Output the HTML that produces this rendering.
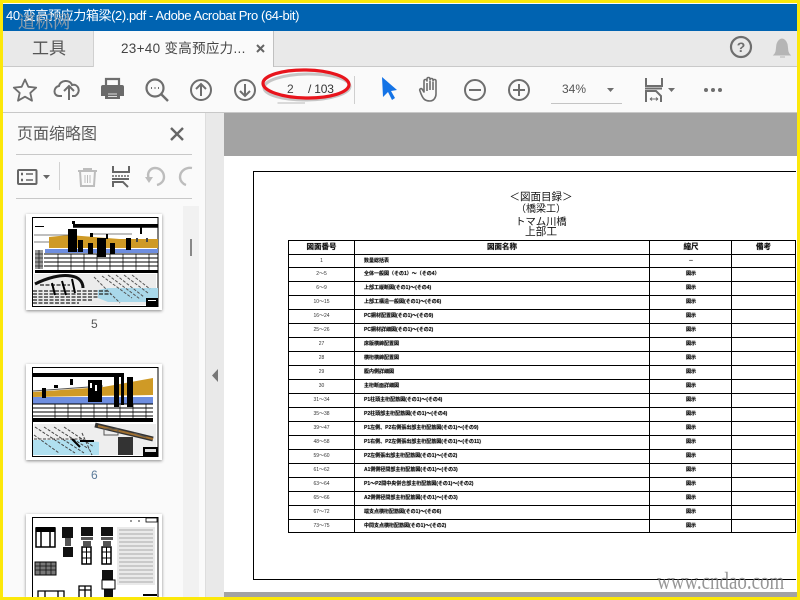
<!DOCTYPE html>
<html lang="zh"><head><meta charset="utf-8"><title>Acrobat</title>
<style>
*{box-sizing:border-box;margin:0;padding:0}
html,body{width:800px;height:600px;overflow:hidden;background:#fff}
body{position:relative;font-family:"Liberation Sans","Noto Sans CJK SC",sans-serif}
.a{position:absolute;white-space:nowrap}
.jp{font-family:"Liberation Sans","Noto Sans CJK JP",sans-serif}
svg{position:absolute;overflow:visible}
.r{position:absolute;left:288px;width:508px;border:1px solid #000;border-top:0;height:14px}
.r i{position:absolute;top:-1px;bottom:0;width:1px;background:#000}
.r b{position:absolute;top:0;line-height:13px;font-size:5px;font-weight:700;color:#111;white-space:nowrap;text-shadow:0 0 .6px rgba(0,0,0,.7);font-family:"Liberation Sans","Noto Sans CJK JP",sans-serif}
.n{left:0;width:65px;text-align:center;font-weight:400!important;text-shadow:none!important;color:#333!important}
.t{left:75px}
.s{left:360px;width:84px;text-align:center}
.h{font-size:7.500px!important;line-height:12px!important}
</style></head><body>
<div class="a" style="left:3px;top:3px;width:794px;height:594px;background:#fafafa"></div>
<div class="a" style="left:3px;top:4px;width:794px;height:27px;background:#0063b1"></div>
<div class="a" style="left:6px;top:7px;font-size:13px;letter-spacing:-.4px;line-height:18px;color:#fff">40 变高预应力箱梁(2).pdf - Adobe Acrobat Pro (64-bit)</div>
<div class="a" style="left:3px;top:31px;width:794px;height:36px;background:#e9e9e9;border-bottom:1px solid #c9c9c9"></div>
<div class="a" style="left:93px;top:31px;width:181px;height:36px;background:#fafafa;border-left:1px solid #d0d0d0;border-right:1px solid #c0c0c0"></div>
<div class="a" style="left:32px;top:37px;font-size:17px;line-height:24px;color:#555">工具</div>
<div class="a" style="left:121px;top:39px;font-size:13.5px;letter-spacing:.3px;line-height:20px;color:#444">23+40 变高预应力...</div>
<svg style="left:0;top:0" width="800" height="115" fill="none" stroke="#6e6e6e" stroke-width="2">
<path d="M257 45l7 7M264 45l-7 7" stroke="#666" stroke-width="2"/>
<circle cx="741" cy="47" r="10" stroke-width="2.2"/><text x="741" y="52" font-size="14" font-weight="700" fill="#6e6e6e" stroke="none" text-anchor="middle" font-family="Liberation Sans">?</text>
<path d="M774 55c3-3 2-6 3-11 1-3 3-5 5-5s4 2 5 5c1 5 0 8 3 11zM780 57h5" fill="#b5b5b5" stroke="#b5b5b5" stroke-width="1"/>
<path d="M25 79.500l3.300 7.300 7.900.8-5.900 5.300 1.700 7.800-7-4-7 4 1.700-7.800-5.900-5.300 7.900-.8z" stroke-width="1.800" stroke-linejoin="round"/>
<path d="M62 96h-3c-6 0-6-9 0-10 1-6 11-7 13-1 6-2 10 7 3 11h-3M69 100V87M64 91l5-5 5 5"/>
<path d="M106 85v-6h13v6" stroke-width="2.200"/><path d="M103 85h19a2 2 0 0 1 2 2v9h-5v-5h-13v5h-5v-9a2 2 0 0 1 2-2z" fill="#6a6a6a" stroke="none"/><rect x="105" y="91" width="15" height="8" fill="#6a6a6a" stroke="none"/><path d="M108 94h9M108 96.500h9" stroke="#ddd" stroke-width="1"/>
<circle cx="155" cy="88" r="8.500" stroke-width="2.200"/><path d="M161 94l7 7" stroke-width="2.400"/><path d="M151 88h1M154.500 88h1M158 88h1" stroke-width="2"/>
<circle cx="201" cy="90" r="10"/><path d="M201 96V84M196 89l5-5 5 5"/>
<circle cx="245" cy="90" r="10"/><path d="M245 84v12M240 91l5 5 5-5"/>
<path d="M277.500 103H305" stroke="#bbb" stroke-width="1"/>
<path d="M354.500 76v28" stroke="#cfcfcf" stroke-width="1"/>
<path d="M382 79l15 13-6 1 4 7-3 2-4-8-5 5z" fill="#1473e6" stroke="none" transform="translate(0,-2)"/>
<path d="M424 99c-2-2-3-5-4-8-1-2 1-3 2-2l2 3V81c0-2 3-2 3 0v-2c0-2 3-2 3 0v1c0-2 3-2 3 0v1c0-2 3-2 3 0v13c0 3-2 7-6 7-3 0-5-1-6-2zM427 83v8M430 81v9M433 82v8" stroke-width="1.600" stroke-linejoin="round"/>
<circle cx="475" cy="90" r="10"/><path d="M469 90h12"/>
<circle cx="519" cy="90" r="10"/><path d="M513 90h12M519 84v12"/>
<path d="M551 103.500h71" stroke="#c4c4c4" stroke-width="1"/>
<path d="M607 88h7l-3.500 4z" fill="#6e6e6e" stroke="none"/>
<path d="M646 78v8h16v-8M645 88.500h17" stroke-width="2"/><path d="M646 102V91h10l5 5v6" stroke-width="2"/><path d="M650 99h8M650 99l2-1.500M650 99l2 1.500M658 99l-2-1.500M658 99l-2 1.500" stroke-width="1"/>
<path d="M668 88h7l-3.500 4z" fill="#6e6e6e" stroke="none"/>
<circle cx="706" cy="90" r="2" fill="#6e6e6e" stroke="none"/><circle cx="713" cy="90" r="2" fill="#6e6e6e" stroke="none"/><circle cx="720" cy="90" r="2" fill="#6e6e6e" stroke="none"/>
</svg>
<div class="a" style="left:287px;top:81px;font-size:12px;line-height:16px;color:#444">2</div>
<div class="a" style="left:308px;top:81px;font-size:12px;letter-spacing:-.2px;line-height:16px;color:#333">/ 103</div>
<div class="a" style="left:562px;top:81px;font-size:12px;line-height:16px;color:#555">34%</div>
<svg style="left:0;top:0" width="400" height="115" fill="none">
<ellipse cx="307" cy="87" rx="43" ry="13" stroke="#888" stroke-width="3" opacity=".45" transform="rotate(-1 307 87)"/>
<ellipse cx="306" cy="84" rx="43" ry="14" stroke="#e8141c" stroke-width="3.200" transform="rotate(1 306 84)"/>
</svg>
<div class="a" style="left:3px;top:112px;width:794px;height:1px;background:#c8c8c8"></div>
<!-- side panel -->
<div class="a" style="left:205px;top:113px;width:19px;height:484px;background:#e9e9e9;border-left:1px solid #ddd"></div>
<div class="a" style="left:183px;top:206px;width:16px;height:391px;background:#f1f1f1"></div>
<div class="a" style="left:190px;top:239px;width:2px;height:17px;background:#888"></div>
<svg style="left:0;top:0" width="225" height="400"><path d="M218 369v13l-6-6.500z" fill="#777"/></svg>
<div class="a" style="left:17px;top:123px;font-size:16px;line-height:23px;color:#5a5a5a">页面缩略图</div>
<div class="a" style="left:16px;top:154px;width:176px;height:1px;background:#c8c8c8"></div>
<div class="a" style="left:16px;top:198px;width:176px;height:1px;background:#c8c8c8"></div>
<div class="a" style="left:59px;top:162px;width:1px;height:28px;background:#d2d2d2"></div>
<svg style="left:0;top:110px" width="200" height="90" fill="none" stroke="#666" stroke-width="2">
<path d="M171 18l12 12M183 18l-12 12" stroke-width="2.400"/>
<rect x="18" y="60" width="18.500" height="14" rx="1"/><path d="M21 64h2M21 70h2" stroke-width="2.500"/><path d="M26 64h7M26 70h7" stroke-width="1.500"/>
<path d="M43 65h7l-3.500 4z" fill="#666" stroke="none"/>
<g stroke="#bdbdbd"><path d="M78 61h19M84 61v-2h7v2M80 61l1 15h13l1-15" stroke-width="2"/><path d="M85 65v8M87.500 65v8M90 65v8" stroke-width="1"/></g>
<path d="M113 56v6h16v-6M112 69h17" stroke-width="2"/><path d="M112 66h17" stroke-dasharray="2 1" stroke-width="1.500"/><path d="M113 77v-5h10l5 5" stroke-width="2"/>
<g stroke="#bdbdbd" stroke-width="2.400"><path d="M149 69c-3-7 2-11 6-11 6 0 9 5 9 9 0 4-3 7-7 8"/><path d="M145 67h8l-4 6z" fill="#bdbdbd" stroke="none"/><path d="M192 58c-6-1-12 3-12 9 0 4 3 7 6 8"/></g>
</svg>
<!-- thumb 5 -->
<div class="a" style="left:26px;top:214px;width:136px;height:96px;background:#fff;box-shadow:0 1px 3px rgba(0,0,0,.45)"></div>
<svg style="left:32px;top:217px;filter:blur(.3px)" width="127" height="90">
<rect x=".5" y=".5" width="125.500" height="89" fill="#fff" stroke="#000"/>
<path d="M17 20l20-2 89 7v6H17z" fill="#cf9a26"/><rect x="17" y="22" width="109" height="3" fill="#cf9a26"/>
<rect x="13" y="32" width="113" height="4" fill="#6e8ee0"/>
<path d="M2 18h40M60 17h40M2 25h15" stroke="#555" stroke-width=".8"/>
<path d="M41 7h85v3.700H41zM36 12h9v23h-9zM46 23h5v12h-5zM56 26h5v11h-5zM65 21h9v19h-9zM78 26h5v11h-5zM94 21h5v12h-5zM3 9h9v1H3zM40 4h3v3h-3zM108 10h2v7h-2zM58 16h3v4h-3zM74 17h2v5h-2z" fill="#000"/>
<path d="M104 21h2v4h-2zM114 21h2v4h-2z" fill="#444"/>
<path d="M12 37h114M12 41h114M12 45h114M12 49h114" stroke="#000" stroke-width="1"/>
<path d="M26 37v16M39 37v16M52 37v16M65 37v16M78 37v16M91 37v16M104 37v16M117 37v16" stroke="#000" stroke-width=".7"/>
<rect x="3" y="53" width="123" height="3" fill="#000"/>
<path d="M3 33h8v19H3z" fill="#999"/><path d="M3 37h8M3 41h8M3 45h8M3 49h8M7 33v19" stroke="#222" stroke-width=".8"/>
<rect x="2" y="57" width="122" height="31" fill="#ececec"/>
<path d="M66 73l10-2 50 0v14H76l-10-4z" fill="#a9d8ea"/>
<path d="M3 67c12-6 26-10 36-8 8 1 12 6 12 12" stroke="#111" stroke-width="3" fill="none"/>
<path d="M1 74h75M1 77h78M1 80h66M1 83h60M1 86h46M8 68h30" stroke="#222" stroke-width="1.300" stroke-dasharray="4 1.500" fill="none"/>
<path d="M70 59l30 22M76 58l32 24M84 58l28 22M92 58l24 18M62 60l26 26M100 58l18 14" stroke="#555" stroke-width="1" stroke-dasharray="3 1.500" fill="none"/>
<path d="M40 62l3 14M30 64l4 14M20 66l3 12" stroke="#000" stroke-width="2"/>
<rect x="114" y="81" width="12" height="9" fill="#000"/><rect x="116" y="83" width="8" height="1" fill="#fff"/>
</svg>
<div class="a" style="left:91px;top:316px;font-size:12px;line-height:16px;color:#555">5</div>
<!-- thumb 6 -->
<div class="a" style="left:26px;top:364px;width:136px;height:96px;background:#fff;box-shadow:0 1px 3px rgba(0,0,0,.45)"></div>
<svg style="left:32px;top:367px;filter:blur(.3px)" width="127" height="90">
<rect x=".5" y=".5" width="125.500" height="89" fill="#fff" stroke="#000"/>
<path d="M1 25l70-5 50-9v17L1 30z" fill="#cf9a26"/><path d="M1 24l70-5" stroke="#555" stroke-width="1"/>
<rect x="1" y="30" width="120" height="7" fill="#6e8ee0"/>
<path d="M1 6h91v4H1zM10 21h4v10h-4zM56 13h14v22H56zM82 6h5v34h-5zM89 6h3v32h-3zM95 10h6v30h-6zM22 18h4v3h-4zM38 12h3v6h-3z" fill="#000"/>
<path d="M58 16h2v5h-2zM63 18h2v6h-2z" fill="#fff"/>
<path d="M1 37h120M1 41h120M1 45h120M1 49h120" stroke="#000" stroke-width="1"/><rect x="1" y="51" width="120" height="4" fill="#000"/>
<path d="M23 37v14M36 37v14M49 37v14M62 37v14M75 37v14M88 37v14M101 37v14M114 37v14" stroke="#000" stroke-width=".7"/>
<rect x="2" y="57" width="122" height="31" fill="#eee"/>
<path d="M1 73h46l20 2v13H1z" fill="#b0e0f0"/>
<path d="M63 58l58 14" stroke="#333" stroke-width="5"/><path d="M66 59l55 13" stroke="#a07030" stroke-width="2"/>
<path d="M3 60l40 26M12 60l40 26M22 60l35 22M32 60l30 20M2 68l25 18M2 72h50M50 66l10 22" stroke="#444" stroke-width="1" stroke-dasharray="3 1.500" fill="none"/>
<path d="M40 72l8 8M48 74h14" stroke="#000" stroke-width="2"/>
<path d="M86 70h15v18H86z" fill="#333"/><path d="M72 62h14v6H72zM102 66l12 4" stroke="#555" stroke-width="1" fill="none"/>
<rect x="111" y="80" width="15" height="10" fill="#000"/><rect x="113" y="82" width="11" height="3" fill="#ddd"/>
</svg>
<div class="a" style="left:91px;top:467px;font-size:12px;line-height:16px;color:#5b7a9a">6</div>
<!-- thumb 7 -->
<div class="a" style="left:26px;top:514px;width:136px;height:83px;background:#fff;box-shadow:0 1px 3px rgba(0,0,0,.45)"></div>
<svg style="left:32px;top:517px;filter:blur(.3px)" width="127" height="80">
<path d="M.5 80V.5h125.500V80" fill="#fff" stroke="#000"/>
<rect x="4" y="11" width="19" height="19" fill="#fff" stroke="#000" stroke-width="1.500"/><rect x="4" y="10" width="19" height="5" fill="#000"/><path d="M9 15v15M18 15v15" stroke="#000" stroke-width="1.500"/>
<path d="M30 10h11v11H30zM49 10h12v9H49zM69 10h12v9H69zM31 30h10v10H31z" fill="#111"/>
<path d="M49 20h12v3H49zM69 20h12v3H69zM33 21h6v8h-6zM51 24h8v5h-8zM71 24h8v5h-8z" fill="#555"/>
<rect x="50" y="30" width="9" height="17" fill="#fff" stroke="#000" stroke-width="1.500"/><rect x="70" y="30" width="9" height="17" fill="#fff" stroke="#000" stroke-width="1.500"/>
<path d="M54.500 30v17M74.500 30v17M50 35h9M70 35h9M50 41h9M70 41h9" stroke="#000"/>
<rect x="85" y="10" width="38" height="58" fill="#eaeaea"/>
<path d="M87 13h34M87 17h34M87 21h34M87 25h34M87 29h34M87 33h34M87 37h34M87 41h34M87 45h34M87 49h34M87 53h34M87 57h34M87 61h34M87 65h34" stroke="#aaa" stroke-width="1"/>
<path d="M98 4h2M106 4h2M114 4h2" stroke="#333"/><rect x="114" y="1" width="11" height="4" fill="#fff" stroke="#000" stroke-width=".8"/>
<rect x="3" y="45" width="21" height="13" fill="#777" stroke="#000"/><path d="M3 49h21M3 53h21M8 45v13M14 45v13M19 45v13" stroke="#111" stroke-width=".8"/>
<path d="M70 53h11v10H70zM72 72h9v8h-9z" fill="#111"/><rect x="70" y="63" width="13" height="9" fill="#fff" stroke="#000"/>
<path d="M6 80V74h26v6M13 74v6M26 74v6M47 80V69h12v11M53 69v11M47 73h12" fill="none" stroke="#000" stroke-width="1.300"/>
<rect x="111" y="77" width="14" height="2" fill="#000"/>
</svg>
<!-- doc -->
<div class="a" style="left:224px;top:113px;width:573px;height:43px;background:#a3a3a3"></div>
<div class="a" style="left:224px;top:156px;width:573px;height:436px;background:#fff"></div>
<div class="a" style="left:224px;top:592px;width:573px;height:5px;background:#a3a3a3"></div>
<div class="a" style="left:253px;top:171px;width:543px;height:409px;border:1px solid #000;border-right:0"></div>
<div class="a jp" style="left:403px;width:276px;top:190px;text-align:center;font-size:10.5px;line-height:14px;color:#111">＜図面目録＞</div>
<div class="a jp" style="left:403px;width:276px;top:203px;text-align:center;font-size:10px;line-height:14px;color:#111">（橋梁工）</div>
<div class="a jp" style="left:403px;width:276px;top:216px;text-align:center;font-size:10.3px;line-height:14px;color:#111">トマム川橋</div>
<div class="a jp" style="left:403px;width:276px;top:225px;text-align:center;font-size:10.7px;line-height:14px;color:#111">上部工</div>
<div class="r" style="top:240px;height:15px;border-top:1px solid #000"><i style="left:65px"></i><i style="left:360px"></i><i style="left:442px"></i><b class="h" style="left:0;width:65px;text-align:center">図面番号</b><b class="h" style="left:66px;width:294px;text-align:center">図面名称</b><b class="s h">縮尺</b><b class="h" style="left:443px;width:63px;text-align:center">備考</b></div>
<div class="r" style="top:255px;height:13px"><i style="left:65px"></i><i style="left:360px"></i><i style="left:442px"></i><b class="n">1</b><b class="t">数量総括表</b><b class="s">－</b></div>
<div class="r" style="top:268px"><i style="left:65px"></i><i style="left:360px"></i><i style="left:442px"></i><b class="n">2～5</b><b class="t">全体一般図（その1）～（その4）</b><b class="s">図示</b></div>
<div class="r" style="top:282px"><i style="left:65px"></i><i style="left:360px"></i><i style="left:442px"></i><b class="n">6～9</b><b class="t">上部工縦断図(その1)～(その4)</b><b class="s">図示</b></div>
<div class="r" style="top:296px"><i style="left:65px"></i><i style="left:360px"></i><i style="left:442px"></i><b class="n">10～15</b><b class="t">上部工構造一般図(その1)～(その6)</b><b class="s">図示</b></div>
<div class="r" style="top:310px"><i style="left:65px"></i><i style="left:360px"></i><i style="left:442px"></i><b class="n">16～24</b><b class="t">PC鋼材配置図(その1)～(その9)</b><b class="s">図示</b></div>
<div class="r" style="top:324px"><i style="left:65px"></i><i style="left:360px"></i><i style="left:442px"></i><b class="n">25～26</b><b class="t">PC鋼材詳細図(その1)～(その2)</b><b class="s">図示</b></div>
<div class="r" style="top:338px"><i style="left:65px"></i><i style="left:360px"></i><i style="left:442px"></i><b class="n">27</b><b class="t">床版横締配置図</b><b class="s">図示</b></div>
<div class="r" style="top:352px"><i style="left:65px"></i><i style="left:360px"></i><i style="left:442px"></i><b class="n">28</b><b class="t">横桁横締配置図</b><b class="s">図示</b></div>
<div class="r" style="top:366px"><i style="left:65px"></i><i style="left:360px"></i><i style="left:442px"></i><b class="n">29</b><b class="t">腹内側詳細図</b><b class="s">図示</b></div>
<div class="r" style="top:380px"><i style="left:65px"></i><i style="left:360px"></i><i style="left:442px"></i><b class="n">30</b><b class="t">主桁断面詳細図</b><b class="s">図示</b></div>
<div class="r" style="top:394px"><i style="left:65px"></i><i style="left:360px"></i><i style="left:442px"></i><b class="n">31～34</b><b class="t">P1柱頭主桁配筋図(その1)～(その4)</b><b class="s">図示</b></div>
<div class="r" style="top:408px"><i style="left:65px"></i><i style="left:360px"></i><i style="left:442px"></i><b class="n">35～38</b><b class="t">P2柱頭部主桁配筋図(その1)～(その4)</b><b class="s">図示</b></div>
<div class="r" style="top:422px"><i style="left:65px"></i><i style="left:360px"></i><i style="left:442px"></i><b class="n">39～47</b><b class="t">P1左側、P2右側張出部主桁配筋図(その1)～(その9)</b><b class="s">図示</b></div>
<div class="r" style="top:436px"><i style="left:65px"></i><i style="left:360px"></i><i style="left:442px"></i><b class="n">48～58</b><b class="t">P1右側、P2左側張出部主桁配筋図(その1)～(その11)</b><b class="s">図示</b></div>
<div class="r" style="top:450px"><i style="left:65px"></i><i style="left:360px"></i><i style="left:442px"></i><b class="n">59～60</b><b class="t">P2左側張出部主桁配筋図(その1)～(その2)</b><b class="s">図示</b></div>
<div class="r" style="top:464px"><i style="left:65px"></i><i style="left:360px"></i><i style="left:442px"></i><b class="n">61～62</b><b class="t">A1側側径間部主桁配筋図(その1)～(その3)</b><b class="s">図示</b></div>
<div class="r" style="top:478px"><i style="left:65px"></i><i style="left:360px"></i><i style="left:442px"></i><b class="n">63～64</b><b class="t">P1～P2間中央併合部主桁配筋図(その1)～(その2)</b><b class="s">図示</b></div>
<div class="r" style="top:492px"><i style="left:65px"></i><i style="left:360px"></i><i style="left:442px"></i><b class="n">65～66</b><b class="t">A2側側径間部主桁配筋図(その1)～(その3)</b><b class="s">図示</b></div>
<div class="r" style="top:506px"><i style="left:65px"></i><i style="left:360px"></i><i style="left:442px"></i><b class="n">67～72</b><b class="t">端支点横桁配筋図(その1)～(その6)</b><b class="s">図示</b></div>
<div class="r" style="top:520px;height:13px"><i style="left:65px"></i><i style="left:360px"></i><i style="left:442px"></i><b class="n">73～75</b><b class="t">中間支点横桁配筋図(その1)～(その2)</b><b class="s">図示</b></div>
<!-- watermarks -->
<div class="a" style="left:18px;top:10px;font-size:17.5px;line-height:24px;color:rgba(160,170,182,.85);font-family:'Liberation Serif','Noto Serif CJK SC',serif;-webkit-text-stroke:.3px rgba(130,140,150,.8)">道标网</div>
<div class="a" style="left:657px;top:567px;font-size:24px;line-height:30px;color:rgba(125,125,125,.8);font-family:'Liberation Serif',serif;transform:scaleX(.79);transform-origin:left top">www.cndao.com</div>
<!-- yellow frame -->
<div class="a" style="left:0;top:0;width:800px;height:600px;border:3px solid #fce80a;pointer-events:none"></div>
</body></html>
